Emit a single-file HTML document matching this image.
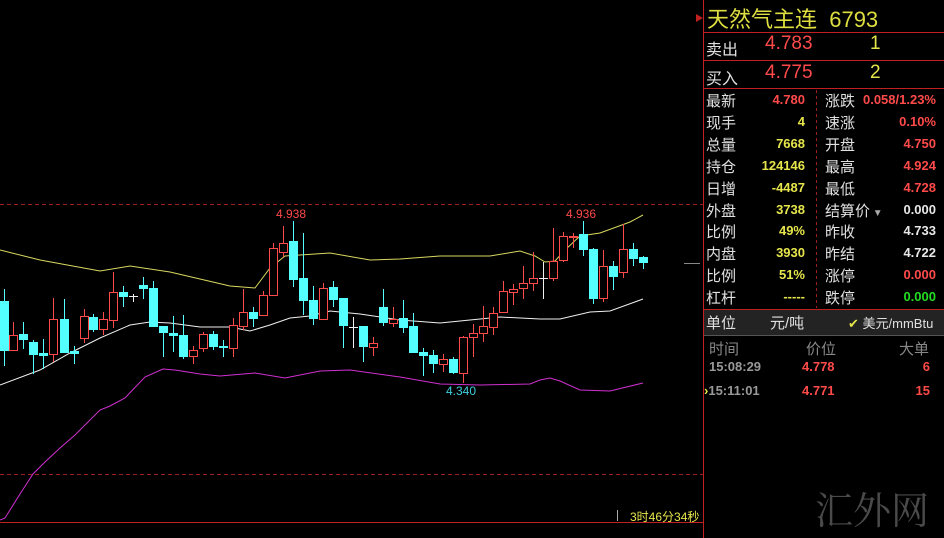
<!DOCTYPE html>
<html><head><meta charset="utf-8"><style>
body{margin:0;background:#000;width:944px;height:538px;overflow:hidden;position:relative;font-family:"Liberation Sans","Noto Sans CJK SC",sans-serif}
.a{position:absolute;white-space:nowrap}
.l{color:#e0e0e0;font-size:15px}
.v{font-size:13px;font-weight:bold;text-align:right}
.y{color:#e6e64c}.r{color:#ff4a4a}.w{color:#e8e8e8}.g{color:#22dd22}
</style></head><body>
<svg width="944" height="538" style="position:absolute;left:0;top:0">
<line x1="0" y1="204.5" x2="703" y2="204.5" stroke="#a02020" stroke-dasharray="4,3"/>
<line x1="0" y1="474.5" x2="703" y2="474.5" stroke="#a02020" stroke-dasharray="4,3"/>
<line x1="0" y1="522.5" x2="703" y2="522.5" stroke="#c02020"/>
<line x1="703.5" y1="0" x2="703.5" y2="538" stroke="#c02020"/>
<line x1="684" y1="263.5" x2="700" y2="263.5" stroke="#888"/>
<line x1="617.5" y1="510" x2="617.5" y2="521" stroke="#aaa"/>
<polyline fill="none" stroke="#d8d860" stroke-width="1" points="0,250 40,260 100,271 130,266 170,272 230,286 255,288 270,268 285,256 330,253 370,260 400,259 440,256 490,256 520,251 535,256 545,262 555,261 565,250 580,236 600,233 630,222 643,215"/>
<polyline fill="none" stroke="#f0f0f0" stroke-width="1" points="0,385 40,370 70,353 100,338 130,325 150,322 170,323 200,327 230,327 250,331 270,325 290,318 310,316 330,311 360,314 400,320 440,323 470,320 500,317 540,319 560,319 590,312 610,311 643,299"/>
<polyline fill="none" stroke="#d030d0" stroke-width="1" points="0,520 5,518 20,494 33,474 45,462 60,448 75,435 100,410 110,406 125,398 145,377 163,369 175,370 200,374 220,376 255,373 285,378 320,371 350,370 400,377 440,384 480,385 530,384 540,380 550,378 560,381 580,390 610,391 643,383"/>
<g id="c"></g>
<text x="276" y="218" fill="#ff4a4a" font-size="12" font-family="Liberation Sans">4.938</text>
<text x="566" y="218" fill="#ff4a4a" font-size="12" font-family="Liberation Sans">4.936</text>
<text x="446" y="395" fill="#40d0e0" font-size="12" font-family="Liberation Sans">4.340</text>
<line x1="704" y1="32.5" x2="944" y2="32.5" stroke="#c02020"/>
<line x1="704" y1="60.5" x2="944" y2="60.5" stroke="#c02020"/>
<line x1="704" y1="88.5" x2="944" y2="88.5" stroke="#c02020"/>
<line x1="816.5" y1="90" x2="816.5" y2="308" stroke="#a02020" stroke-dasharray="3,3"/>
<line x1="704" y1="309.5" x2="944" y2="309.5" stroke="#c02020"/>
<rect x="704" y="310" width="240" height="25" fill="#232323"/>
<line x1="704" y1="335.5" x2="944" y2="335.5" stroke="#555"/>
<polygon points="696,14 703,18 696,22" fill="#c02020"/>
</svg>
<div class="a" style="left:707px;top:2px;font-size:22px;color:#dede40">天然气主连&nbsp; 6793</div>
<div class="a l" style="left:706px;top:36px;font-size:16px">卖出</div><div class="a r" style="left:765px;top:33px;font-size:19px">4.783</div><div class="a y" style="left:870px;top:33px;font-size:19px">1</div>
<div class="a l" style="left:706px;top:65px;font-size:16px">买入</div><div class="a r" style="left:765px;top:62px;font-size:19px">4.775</div><div class="a y" style="left:870px;top:62px;font-size:19px">2</div>
<div id="rows"></div>
<div class="a l" style="left:706px;top:312px">单位</div>
<div class="a l" style="left:770px;top:312px">元/吨</div>
<div class="a l" style="left:848px;top:313px;font-size:13px"><span class="y">✔</span> 美元/mmBtu</div>
<div class="a" style="left:709px;top:338px;font-size:15px;color:#888">时间</div>
<div class="a" style="left:806px;top:338px;font-size:15px;color:#888">价位</div>
<div class="a" style="left:899px;top:338px;font-size:15px;color:#888">大单</div>
<div class="a v" style="left:709px;top:359px;color:#999">15:08:29</div><div class="a v r" style="left:802px;top:359px">4.778</div><div class="a v r" style="right:14px;top:359px">6</div>
<div class="a v" style="left:704px;top:383px;color:#999"><span class="y">›</span>15:11:01</div><div class="a v r" style="left:802px;top:383px">4.771</div><div class="a v r" style="right:14px;top:383px">15</div>
<div class="a" style="left:630px;top:508px;font-size:12px;color:#e6e64c">3时46分34秒</div>
<div class="a" style="left:815px;top:489px;font-size:38px;color:#4a4a4a;font-family:'Noto Serif CJK SC',serif;line-height:1">汇外网</div>
<script>
var C=[[4,'c',301,351,289,366],[13,'r',335,350,322,351],[23,'c',334,340,322,349],[33,'c',342,355,340,374],[43,'c',353,356,339,369],[53,'r',319,354,298,362],[64,'c',319,353,299,353],[74,'c',351,354,346,364],[84,'r',316,338,309,343],[93,'c',317,330,314,332],[103,'r',319,329,312,335],[113,'r',292,320,272,328],[123,'c',292,297,286,307],[133,'w',296,296,294,302],[143,'c',285,289,277,299],[153,'c',288,327,281,327],[163,'c',326,333,326,357],[173,'c',333,336,316,352],[183,'c',335,357,315,359],[193,'r',350,356,346,364],[203,'r',334,348,332,352],[213,'c',334,347,331,350],[223,'c',346,348,340,357],[233,'r',325,348,318,357],[243,'r',312,326,289,330],[253,'c',312,319,307,327],[263,'r',295,315,291,316],[273,'r',248,295,243,296],[283,'r',243,252,226,257],[293,'c',241,280,221,287],[303,'c',278,301,233,315],[313,'c',300,319,286,325],[323,'r',288,319,283,320],[333,'c',287,300,281,307],[343,'c',298,326,298,348],[353,'w',327,327,317,348],[363,'c',326,347,326,362],[373,'r',343,347,337,356],[383,'c',307,323,289,326],[393,'r',319,323,307,327],[403,'c',318,328,300,333],[413,'c',326,353,313,353],[423,'c',352,356,348,376],[433,'c',355,364,350,373],[443,'r',359,364,354,372],[453,'c',359,373,357,374],[463,'r',337,373,336,383],[473,'r',333,337,324,357],[483,'r',326,333,306,342],[493,'r',313,327,307,335],[503,'r',291,312,281,313],[513,'r',289,292,284,305],[523,'r',283,288,266,299],[533,'r',278,283,252,291],[543,'w',278,278,262,299],[553,'r',261,278,228,281],[563,'r',236,260,232,262],[573,'r',236,237,233,248],[583,'c',234,250,221,256],[593,'c',249,299,248,304],[603,'r',266,298,250,302],[613,'c',266,277,261,290],[623,'r',249,272,224,278],[633,'c',249,259,243,266],[643,'c',257,263,256,269]];
var s='';C.forEach(function(k){var x=k[0],col=k[1]=='c'?'#54ffff':k[1]=='r'?'#ff4a4a':'#f0f0f0';
s+='<line x1="'+(x+.5)+'" y1="'+k[4]+'" x2="'+(x+.5)+'" y2="'+k[5]+'" stroke="'+col+'"/>';
var h=Math.max(k[3]-k[2],1);
if(k[1]=='c')s+='<rect x="'+(x-4)+'" y="'+k[2]+'" width="9" height="'+h+'" fill="'+col+'"/>';
else if(k[1]=='r')s+='<rect x="'+(x-3.5)+'" y="'+(k[2]+.5)+'" width="8" height="'+h+'" fill="#000" stroke="'+col+'"/>';
else s+='<line x1="'+(x-4)+'" y1="'+(k[2]+.5)+'" x2="'+(x+5)+'" y2="'+(k[2]+.5)+'" stroke="'+col+'"/>';});
document.getElementById('c').innerHTML=s;
var R=[['最新','4.780','r','涨跌','0.058/1.23%','r'],['现手','4','y','速涨','0.10%','r'],['总量','7668','y','开盘','4.750','r'],['持仓','124146','y','最高','4.924','r'],['日增','-4487','y','最低','4.728','r'],['外盘','3738','y','结算价<span style="color:#aaa;font-size:10px"> ▼</span>','0.000','w'],['比例','49%','y','昨收','4.733','w'],['内盘','3930','y','昨结','4.722','w'],['比例','51%','y','涨停','0.000','r'],['杠杆','-----','y','跌停','0.000','g']];
var h='';R.forEach(function(r,i){var t=90+i*21.9;
h+='<div class="a l" style="left:706px;top:'+t+'px">'+r[0]+'</div><div class="a v '+r[2]+'" style="right:139px;top:'+(t+2)+'px">'+r[1]+'</div><div class="a l" style="left:825px;top:'+t+'px">'+r[3]+'</div><div class="a v '+r[5]+'" style="right:8px;top:'+(t+2)+'px">'+r[4]+'</div>';});
document.getElementById('rows').innerHTML=h;
</script>
</body></html>
